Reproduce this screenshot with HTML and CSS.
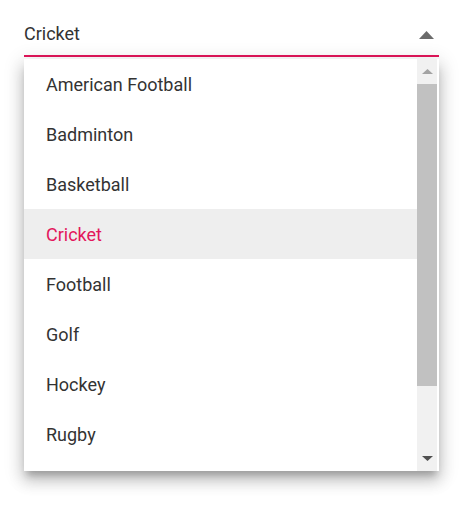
FILE: index.html
```html
<!DOCTYPE html>
<html>
<head>
<meta charset="utf-8">
<link rel="stylesheet" href="styles.css">
</head>
<body>
<div class="wrap">
  <div class="input">
    <span class="value">Cricket</span>
    <svg class="caret" width="15" height="8" viewBox="0 0 15 8"><polygon points="0,8 15,8 7.5,0" fill="#6b6b6b"/></svg>
  </div>
  <div class="popup">
    <ul class="list">
      <li>American Football</li>
      <li>Badminton</li>
      <li>Basketball</li>
      <li class="active">Cricket</li>
      <li>Football</li>
      <li>Golf</li>
      <li>Hockey</li>
      <li>Rugby</li>
    </ul>
    <div class="scrollbar">
      <div class="sb-btn"><svg width="11" height="5" viewBox="0 0 11 5"><polygon points="0,5 11,5 5.5,0" fill="#a3a3a3"/></svg></div>
      <div class="thumb"></div>
      <div class="sb-rest"></div>
      <div class="sb-btn down"><svg width="11" height="5" viewBox="0 0 11 5"><polygon points="0,0 11,0 5.5,5" fill="#505050"/></svg></div>
    </div>
  </div>
</div>
</body>
</html>
```

FILE: styles.css
```css
html, body {
  margin: 0;
  padding: 0;
  background: #ffffff;
}
body {
  font-family: Roboto, "Liberation Sans", sans-serif;
  color: #212121;
  min-height: 520px;
}
.wrap {
  padding: 20px 35px 49px 24px;
}
.input {
  display: flex;
  align-items: flex-start;
  justify-content: space-between;
  height: 35px;
  border-bottom: 2px solid #e3165b;
}
.value {
  font-size: 18px;
  line-height: 28px;
  color: #333333;
}
.caret {
  display: block;
  margin-top: 11px;
  margin-right: 5px;
}
.popup {
  margin-top: 2px;
  height: 412px;
  display: flex;
  background: #ffffff;
  box-shadow: 0 7px 7px -3px rgba(0,0,0,.22), 0 10px 14px 1px rgba(0,0,0,.15), 0 4px 18px 3px rgba(0,0,0,.12);
}
.list {
  flex: 1;
  list-style: none;
  margin: 0;
  padding: 0;
}
.list li {
  height: 50px;
  box-sizing: border-box;
  padding-top: 1px;
  line-height: 49px;
  padding-left: 22px;
  font-size: 18px;
  color: #333333;
}
.list li.active {
  background: #eeeeee;
  color: #e3165b;
}
.scrollbar {
  width: 20px;
  margin-right: 2px;
  background: #f1f1f1;
  display: flex;
  flex-direction: column;
}
.sb-btn {
  height: 25px;
  display: flex;
  align-items: center;
  justify-content: center;
}
.thumb {
  height: 302px;
  background: #c1c1c1;
}
.sb-rest {
  flex: 1;
}
```
